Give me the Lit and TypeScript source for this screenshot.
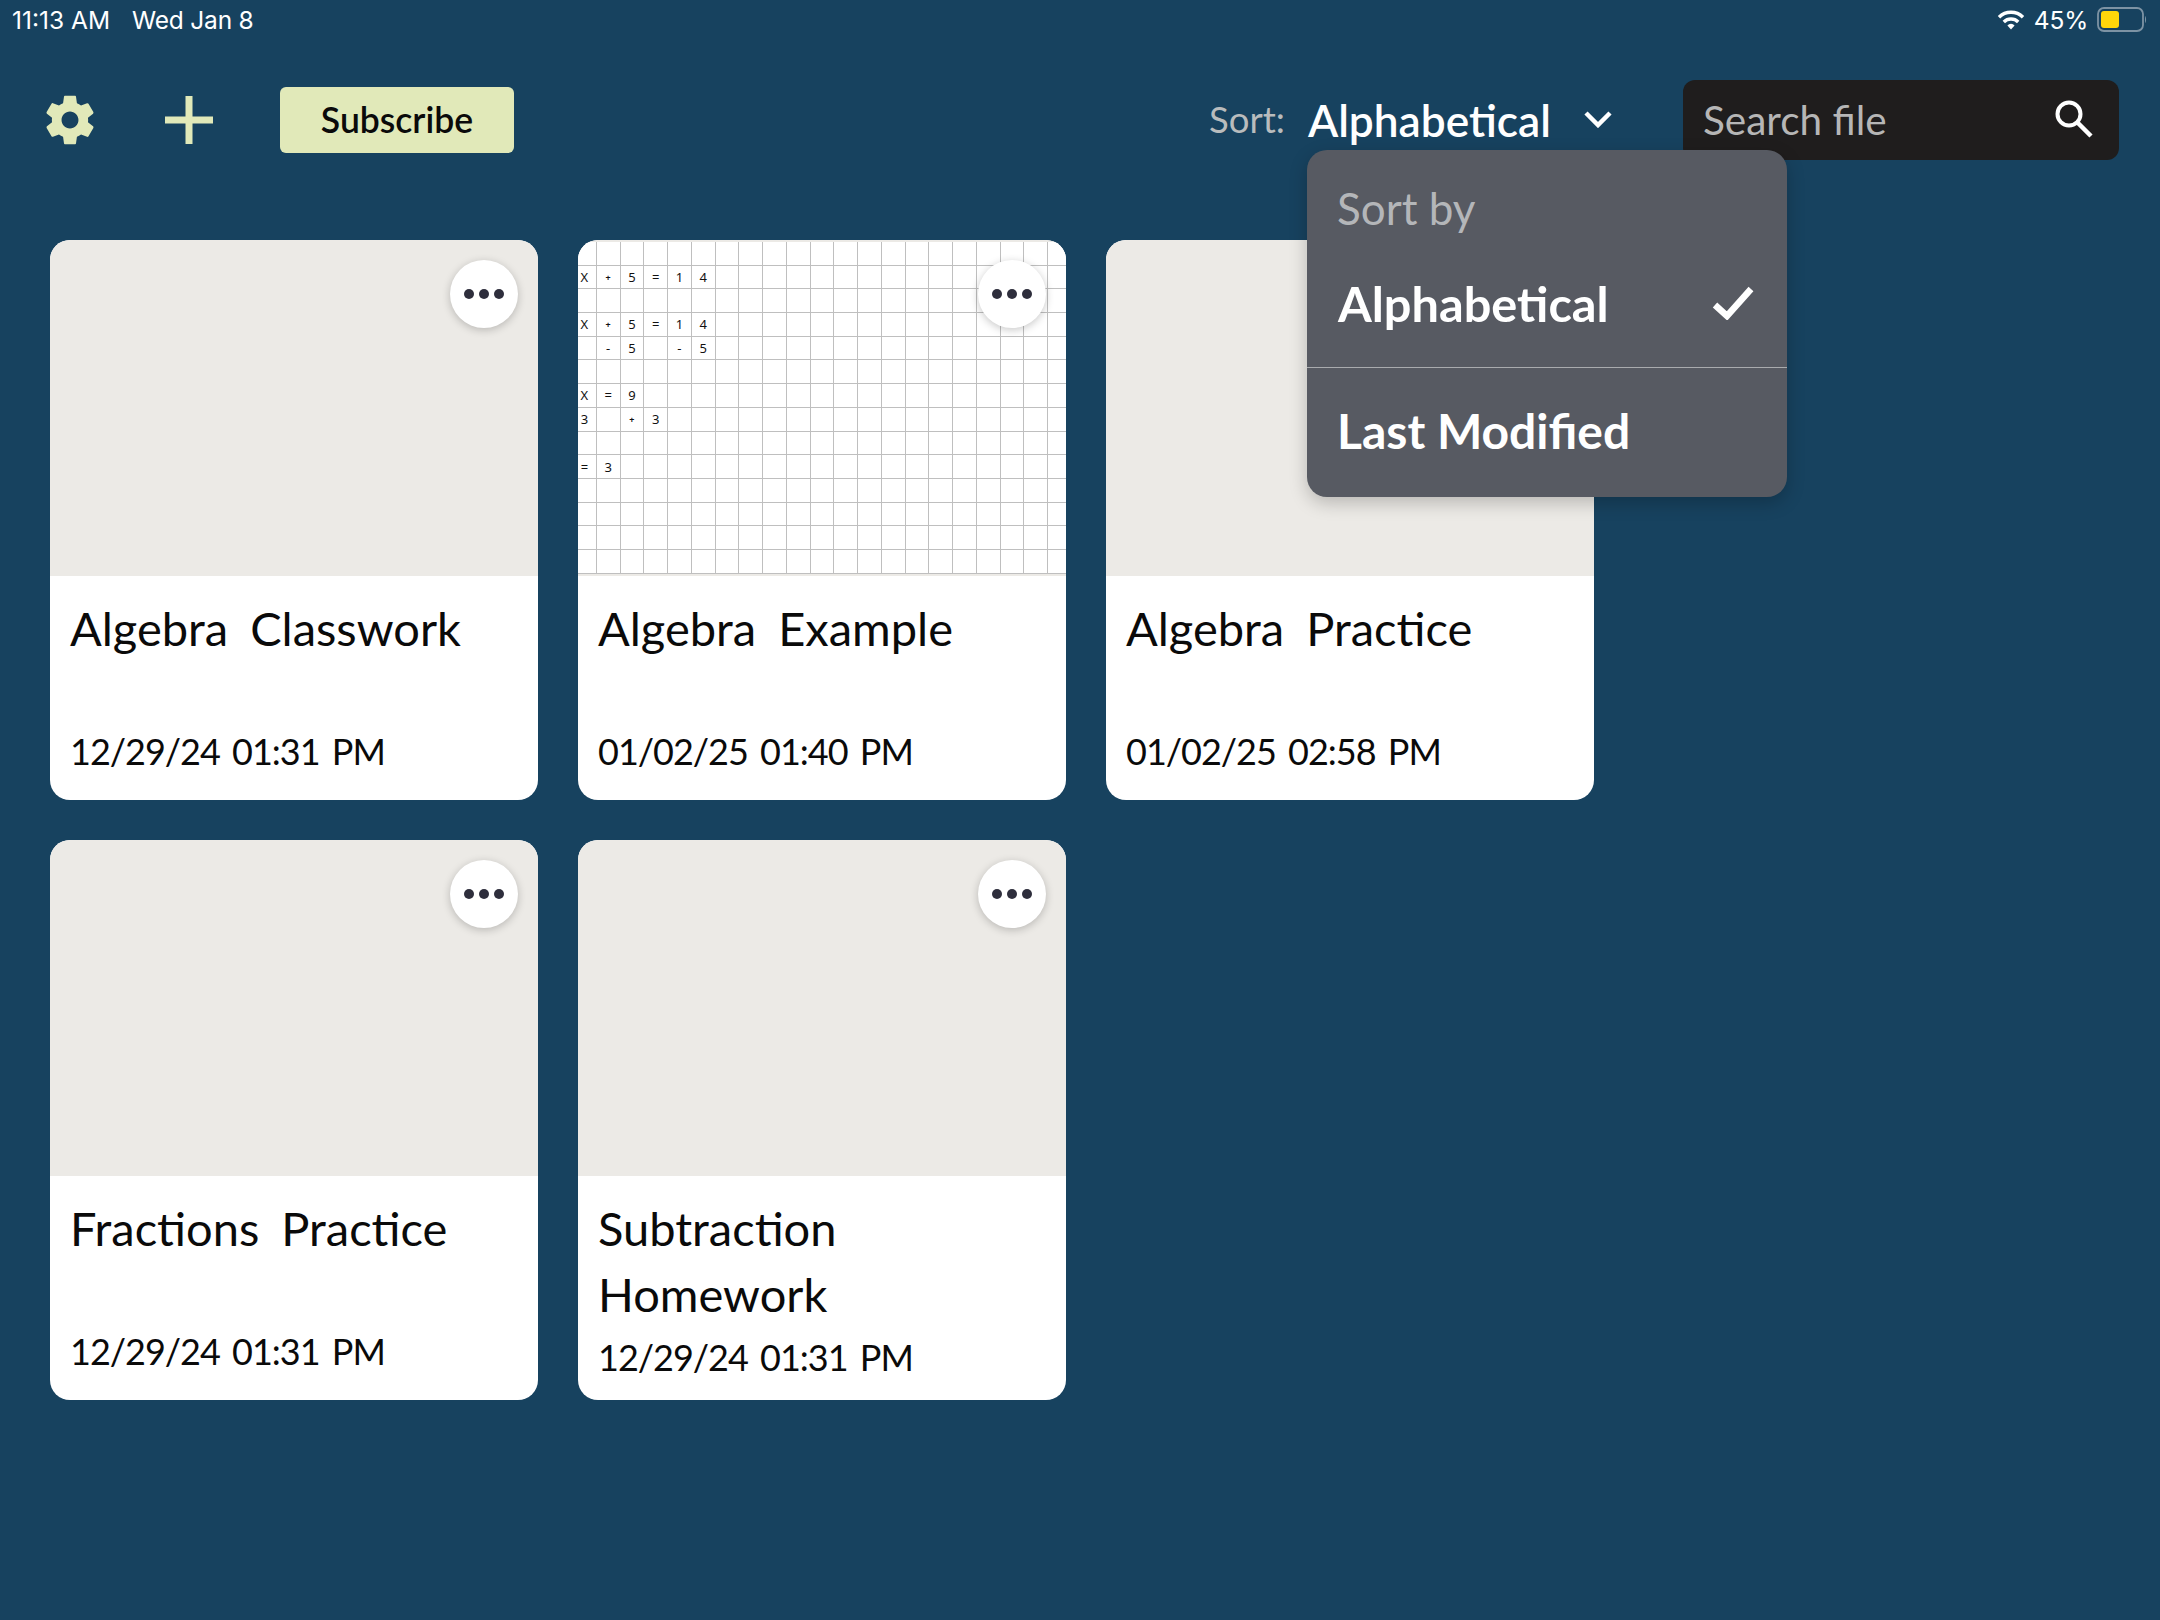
import { LitElement, html, css, svg } from "lit";
import { customElement } from "lit/decorators.js";

const gridRows: string[][] = [
  [],
  ["X", "+", "5", "=", "1", "4"],
  [],
  ["X", "+", "5", "=", "1", "4"],
  ["", "-", "5", "", "-", "5"],
  [],
  ["X", "=", "9"],
  ["3", "", "+", "3"],
  [],
  ["=", "3"],
  [],
  [],
  [],
  [],
];

const cards = [
  { title: ["Algebra Classwork"], date: "12/29/24 01:31 PM", grid: false },
  { title: ["Algebra Example"], date: "01/02/25 01:40 PM", grid: true },
  { title: ["Algebra Practice"], date: "01/02/25 02:58 PM", grid: false },
  { title: ["Fractions Practice"], date: "12/29/24 01:31 PM", grid: false },
  { title: ["Subtraction", "Homework"], date: "12/29/24 01:31 PM", grid: false },
];

const gearPath =
  "M19.43 12.98c.04-.32.07-.64.07-.98s-.03-.66-.07-.98l2.11-1.65c.19-.15.24-.42.12-.64l-2-3.46c-.12-.22-.39-.3-.61-.22l-2.49 1c-.52-.4-1.08-.73-1.69-.98l-.38-2.65C14.46 2.18 14.25 2 14 2h-4c-.25 0-.46.18-.49.42l-.38 2.65c-.61.25-1.17.59-1.69.98l-2.49-1c-.23-.09-.49 0-.61.22l-2 3.46c-.13.22-.07.49.12.64l2.11 1.65c-.04.32-.07.65-.07.98s.03.66.07.98l-2.11 1.65c-.19.15-.24.42-.12.64l2 3.46c.12.22.39.3.61.22l2.49-1c.52.4 1.08.73 1.69.98l.38 2.65c.03.24.24.42.49.42h4c.25 0 .46-.18.49-.42l.38-2.65c.61-.25 1.17-.59 1.69-.98l2.49 1c.23.09.49 0 .61-.22l2-3.46c.12-.22.07-.49-.12-.64l-2.11-1.65zM12 15.5c-1.93 0-3.5-1.57-3.5-3.5s1.57-3.5 3.5-3.5 3.5 1.57 3.5 3.5-1.57 3.5-3.5 3.5z";

@customElement("app-root")
export class AppRoot extends LitElement {
  static styles = css`
    :host {
      display: block;
      min-height: 1620px;
      background: #17425f;
      font-family: "Lato", "Liberation Sans", sans-serif;
      color: #000;
    }
    .status {
      height: 40px;
      display: flex;
      align-items: center;
      padding: 0 13px 0 12px;
      color: #fff;
      font-family: "Inter", "Liberation Sans", sans-serif;
      font-size: 24.5px;
      letter-spacing: -0.2px;
    }
    .status .time {
      letter-spacing: 0;
    }
    .status .date {
      margin-left: 22px;
    }
    .status .right {
      margin-left: auto;
      display: flex;
      align-items: center;
    }
    .status .pct {
      margin: 0 9px 0 9px;
    }
    .status svg {
      display: block;
    }
    .toolbar {
      margin-top: 40px;
      height: 80px;
      display: flex;
      align-items: center;
      padding: 0 41px 0 46px;
    }
    .gear {
      display: block;
      width: 58px;
      height: 58px;
      margin: 0 -5px;
    }
    .plus {
      display: block;
      margin-left: 71px;
      width: 48px;
      height: 48px;
    }
    .subscribe {
      margin-left: 67px;
      width: 234px;
      height: 66px;
      box-sizing: border-box;
      padding-bottom: 2px;
      display: flex;
      align-items: center;
      justify-content: center;
      border-radius: 6px;
      background: #e1e9b9;
      font-size: 35.5px;
      font-weight: 600;
      color: #0a0a0a;
    }
    .sort {
      position: relative;
      margin-left: auto;
      height: 60px;
      box-sizing: border-box;
      padding-bottom: 2px;
      display: flex;
      align-items: center;
    }
    .sort-label {
      font-size: 36.5px;
      color: #b9bcbd;
    }
    .sort-value {
      margin-left: 23px;
      font-size: 44.2px;
      font-weight: 600;
      color: #fff;
    }
    .chevron {
      display: block;
      margin-left: 33px;
      width: 28px;
      height: 18px;
    }
    .search {
      margin-left: 71px;
      width: 436px;
      height: 80px;
      box-sizing: border-box;
      display: flex;
      align-items: center;
      justify-content: space-between;
      padding: 0 25px 2px 20px;
      border-radius: 12px;
      background: #1f1d1d;
      color: #b6b6b6;
      font-size: 40.5px;
    }
    .search svg {
      display: block;
      width: 40px;
      height: 40px;
    }
    .menu {
      position: absolute;
      left: 98px;
      top: 60px;
      width: 480px;
      height: 347px;
      z-index: 5;
      box-sizing: border-box;
      display: flex;
      flex-direction: column;
      border-radius: 20px;
      background: #575a62;
      color: #fff;
      box-shadow: 0 6px 18px rgba(0, 0, 0, 0.22);
    }
    .menu-head {
      height: 90px;
      padding-left: 30px;
      padding-top: 26px;
      box-sizing: border-box;
      display: flex;
      align-items: center;
      font-size: 44px;
      color: #b4b6b9;
    }
    .menu-item {
      display: flex;
      align-items: center;
      justify-content: space-between;
      padding: 0 33px 0 31px;
      font-size: 48px;
      font-weight: 700;
    }
    .menu-item.first {
      height: 128px;
      font-size: 48.7px;
      padding-bottom: 2px;
      box-sizing: border-box;
      border-bottom: 1px solid #a9abae;
    }
    .menu-item.last {
      flex: 1;
      padding-left: 30px;
      padding-bottom: 4px;
    }
    .menu-item svg {
      display: block;
      width: 42px;
      height: 34px;
    }
    .grid {
      margin-top: 80px;
      padding-left: 50px;
      display: grid;
      grid-template-columns: repeat(3, 488px);
      gap: 40px;
    }
    .card {
      position: relative;
      height: 560px;
      border-radius: 20px;
      overflow: hidden;
      background: #fff;
      display: flex;
      flex-direction: column;
    }
    .thumb {
      height: 336px;
      flex: none;
      background: #eceae6;
      overflow: hidden;
    }
    .paper {
      margin-top: 2px;
      height: 332px;
      background-color: #fff;
      overflow: hidden;
    }
    .paper-grid {
      margin-left: -5px;
      display: grid;
      grid-template-columns: repeat(21, 23.75px);
      grid-auto-rows: 23.7px;
      width: 500px;
    }
    .cell {
      box-sizing: border-box;
      border-right: 1px solid #bfbfbf;
      border-bottom: 1px solid #bfbfbf;
      display: flex;
      align-items: center;
      justify-content: center;
      font-family: "Noto Sans", sans-serif;
      font-size: 13px;
      color: #111;
    }
    .cell.sym {
      font-size: 9px;
      font-weight: 700;
    }
    .more {
      position: absolute;
      top: 20px;
      right: 20px;
      width: 68px;
      height: 68px;
      border-radius: 50%;
      background: #fff;
      box-shadow: 0 2px 8px rgba(0, 0, 0, 0.22);
      display: flex;
      align-items: center;
      justify-content: center;
      gap: 5px;
    }
    .more span {
      width: 10px;
      height: 10px;
      border-radius: 50%;
      background: #2e2e3c;
    }
    .body {
      padding: 19px 20px 0;
    }
    .title {
      min-height: 133px;
      font-size: 47px;
      line-height: 66px;
      word-spacing: 10px;
      color: #0a0a0a;
    }
    .card-date {
      font-size: 36px;
      line-height: 46px;
      letter-spacing: -1px;
      word-spacing: 4px;
      color: #0a0a0a;
    }
    .card-date.two {
      margin-top: 6px;
    }
  `;

  private wifi() {
    return html`<svg width="28" height="22" viewBox="0 0 28 22" fill="none" stroke="#fff" stroke-width="3.4">
      ${svg`<path d="M2 8.2 A17 17 0 0 1 26 8.2" />
      <path d="M6.8 13 A10.2 10.2 0 0 1 21.2 13" />
      <path d="M14 20.5 L10.4 16.4 A5 5 0 0 1 17.6 16.4 Z" fill="#fff" stroke="none" />`}
    </svg>`;
  }

  private battery() {
    return html`<svg width="50" height="26" viewBox="0 0 50 26">
      ${svg`<rect x="1" y="1" width="45" height="23" rx="6" fill="none" stroke="#7d93a4" stroke-width="1.8" />
      <rect x="4" y="4" width="18" height="17" rx="3" fill="#ffd60a" />
      <path d="M48 9 C49.4 10 49.4 15 48 16 Z" fill="#7d93a4" />`}
    </svg>`;
  }

  private card(c: (typeof cards)[number]) {
    return html`<div class="card">
      <div class="thumb">
        ${c.grid
          ? html`<div class="paper">
              <div class="paper-grid">
                ${gridRows.map((row) =>
                  Array.from(
                    { length: 21 },
                    (_, i) => html`<div class="cell ${row[i] === "+" ? "sym" : ""}">${row[i] ?? ""}</div>`
                  )
                )}
              </div>
            </div>`
          : ""}
      </div>
      <div class="more"><span></span><span></span><span></span></div>
      <div class="body">
        <div class="title">${c.title.map((t) => html`<div>${t}</div>`)}</div>
        <div class="card-date ${c.title.length > 1 ? "two" : ""}">${c.date}</div>
      </div>
    </div>`;
  }

  render() {
    return html`
      <div class="status">
        <span class="time">11:13 AM</span><span class="date">Wed Jan 8</span>
        <div class="right">${this.wifi()}<span class="pct">45%</span>${this.battery()}</div>
      </div>
      <div class="toolbar">
        <svg class="gear" viewBox="0 0 24 24" fill="#e1e9b9"><path d=${gearPath} /></svg>
        <svg class="plus" viewBox="0 0 48 48" fill="#e1e9b9"><rect x="20.5" y="0" width="7" height="48" /><rect x="0" y="20.5" width="48" height="7" /></svg>
        <div class="subscribe">Subscribe</div>
        <div class="sort">
          <span class="sort-label">Sort:</span>
          <span class="sort-value">Alphabetical</span>
          <svg class="chevron" viewBox="0 0 28 18" fill="none" stroke="#fff" stroke-width="4.5"><path d="M2 3 L14 15 L26 3" /></svg>
          <div class="menu">
            <div class="menu-head">Sort by</div>
            <div class="menu-item first">
              <span>Alphabetical</span>
              <svg viewBox="0 0 42 34" fill="none" stroke="#fff" stroke-width="6.5"><path d="M3 19 L15 30 L39 3" /></svg>
            </div>
            <div class="menu-item last"><span>Last Modified</span></div>
          </div>
        </div>
        <div class="search">
          <span>Search file</span>
          <svg viewBox="0 0 40 40" fill="none" stroke="#fff" stroke-width="4"><circle cx="15" cy="15" r="11.5" /><path d="M23.5 23.5 L37 37" stroke-width="4.5" /></svg>
        </div>
      </div>
      <div class="grid">${cards.map((c) => this.card(c))}</div>
    `;
  }
}
